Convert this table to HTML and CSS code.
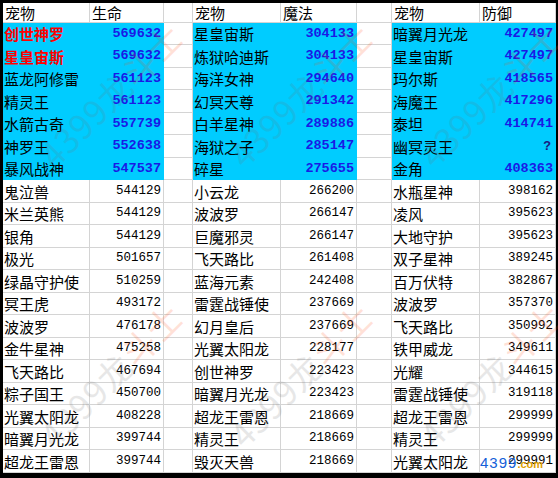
FILE: index.html
```html
<!DOCTYPE html>
<html lang="zh">
<head>
<meta charset="utf-8">
<title>宠物属性排行</title>
<link rel="stylesheet" href="styles.css">
</head>
<body>
<div class="page">
  <div class="sheet">
    <div class="c h">宠物</div><div class="c h">生命</div><div class="c g"></div>
    <div class="c h">宠物</div><div class="c h">魔法</div><div class="c g"></div>
    <div class="c h">宠物</div><div class="c h">防御</div>

    <div class="c hl red">创世神罗</div><div class="c hl n bl">569632</div><div class="c g"></div>
    <div class="c hl">星皇宙斯</div><div class="c hl n bl">304133</div><div class="c g"></div>
    <div class="c hl">暗翼月光龙</div><div class="c hl n bl">427497</div>

    <div class="c hl red">星皇宙斯</div><div class="c hl n bl">569632</div><div class="c g"></div>
    <div class="c hl">炼狱哈迪斯</div><div class="c hl n bl">304133</div><div class="c g"></div>
    <div class="c hl">星皇宙斯</div><div class="c hl n bl">427497</div>

    <div class="c hl">蓝龙阿修雷</div><div class="c hl n bl">561123</div><div class="c g"></div>
    <div class="c hl">海洋女神</div><div class="c hl n bl">294640</div><div class="c g"></div>
    <div class="c hl">玛尔斯</div><div class="c hl n bl">418565</div>

    <div class="c hl">精灵王</div><div class="c hl n bl">561123</div><div class="c g"></div>
    <div class="c hl">幻冥天尊</div><div class="c hl n bl">291342</div><div class="c g"></div>
    <div class="c hl">海魔王</div><div class="c hl n bl">417296</div>

    <div class="c hl">水箭古奇</div><div class="c hl n bl">557739</div><div class="c g"></div>
    <div class="c hl">白羊星神</div><div class="c hl n bl">289886</div><div class="c g"></div>
    <div class="c hl">泰坦</div><div class="c hl n bl">414741</div>

    <div class="c hl">神罗王</div><div class="c hl n bl">552638</div><div class="c g"></div>
    <div class="c hl">海狱之子</div><div class="c hl n bl">285147</div><div class="c g"></div>
    <div class="c hl">幽冥灵王</div><div class="c hl n q">?</div>

    <div class="c hl">暴风战神</div><div class="c hl n bl">547537</div><div class="c g"></div>
    <div class="c hl">碎星</div><div class="c hl n bl">275655</div><div class="c g"></div>
    <div class="c hl">金角</div><div class="c hl n bl">408363</div>

    <div class="c">鬼泣兽</div><div class="c n">544129</div><div class="c g"></div>
    <div class="c">小云龙</div><div class="c n">266200</div><div class="c g"></div>
    <div class="c">水瓶星神</div><div class="c n">398162</div>

    <div class="c">米兰英熊</div><div class="c n">544129</div><div class="c g"></div>
    <div class="c">波波罗</div><div class="c n">266147</div><div class="c g"></div>
    <div class="c">凌风</div><div class="c n">395623</div>

    <div class="c">银角</div><div class="c n">544129</div><div class="c g"></div>
    <div class="c">巨魔邪灵</div><div class="c n">266147</div><div class="c g"></div>
    <div class="c">大地守护</div><div class="c n">395623</div>

    <div class="c">极光</div><div class="c n">501657</div><div class="c g"></div>
    <div class="c">飞天路比</div><div class="c n">261408</div><div class="c g"></div>
    <div class="c">双子星神</div><div class="c n">389245</div>

    <div class="c">绿晶守护使</div><div class="c n">510259</div><div class="c g"></div>
    <div class="c">蓝海元素</div><div class="c n">242408</div><div class="c g"></div>
    <div class="c">百万伏特</div><div class="c n">382867</div>

    <div class="c">冥王虎</div><div class="c n">493172</div><div class="c g"></div>
    <div class="c">雷霆战锤使</div><div class="c n">237669</div><div class="c g"></div>
    <div class="c">波波罗</div><div class="c n">357370</div>

    <div class="c">波波罗</div><div class="c n">476178</div><div class="c g"></div>
    <div class="c">幻月皇后</div><div class="c n">237669</div><div class="c g"></div>
    <div class="c">飞天路比</div><div class="c n">350992</div>

    <div class="c">金牛星神</div><div class="c n">475258</div><div class="c g"></div>
    <div class="c">光翼太阳龙</div><div class="c n">228177</div><div class="c g"></div>
    <div class="c">铁甲威龙</div><div class="c n">349611</div>

    <div class="c">飞天路比</div><div class="c n">467694</div><div class="c g"></div>
    <div class="c">创世神罗</div><div class="c n">223423</div><div class="c g"></div>
    <div class="c">光耀</div><div class="c n">344615</div>

    <div class="c">粽子国王</div><div class="c n">450700</div><div class="c g"></div>
    <div class="c">暗翼月光龙</div><div class="c n">223423</div><div class="c g"></div>
    <div class="c">雷霆战锤使</div><div class="c n">319118</div>

    <div class="c">光翼太阳龙</div><div class="c n">408228</div><div class="c g"></div>
    <div class="c">超龙王雷恩</div><div class="c n">218669</div><div class="c g"></div>
    <div class="c">超龙王雷恩</div><div class="c n">299999</div>

    <div class="c">暗翼月光龙</div><div class="c n">399744</div><div class="c g"></div>
    <div class="c">精灵王</div><div class="c n">218669</div><div class="c g"></div>
    <div class="c">精灵王</div><div class="c n">299999</div>

    <div class="c">超龙王雷恩</div><div class="c n">399744</div><div class="c g"></div>
    <div class="c">毁灭天兽</div><div class="c n">218669</div><div class="c g"></div>
    <div class="c">光翼太阳龙</div><div class="c n">299991</div>
  </div>

  <div class="wm wm1"><span class="wg">4399龙</span><span class="wo">斗士</span></div>
  <div class="wm wm2"><span class="wg">4399龙</span><span class="wo">斗士</span></div>
  <div class="wm wm3"><span class="wg">4399龙</span><span class="wo">斗士</span></div>
  <div class="wm wm4"><span class="wg">4399龙</span><span class="wo">斗士</span></div>
  <div class="wm wm5"><span class="wg">4399龙</span><span class="wo">斗士</span></div>
  <div class="wm wm6"><span class="wg">4399龙</span><span class="wo">斗士</span></div>

  <div class="logo"><span class="lnum">4399</span><span class="lsub">.com</span></div>
</div>
</body>
</html>
```
FILE: styles.css
```css
html, body {
  margin: 0;
  padding: 0;
  background: #000;
}
body {
  width: 558px;
  height: 478px;
  overflow: hidden;
}
.page {
  position: relative;
  padding: 3px 0 0 3px;
  width: 558px;
  height: 478px;
  box-sizing: border-box;
  overflow: hidden;
}
.sheet {
  display: grid;
  grid-template-columns: 87px 74px 29px 88px 76px 35px 88px 76px;
  grid-template-rows: 20px repeat(10, 22px 23px);
  width: 553px;
  background: #fff;
  font-family: "Noto Sans CJK SC", "Noto Sans", sans-serif;
  font-size: 15px;
  color: #000;
}
.c {
  box-sizing: border-box;
  border-right: 1px solid #d4d4d4;
  border-bottom: 1px solid #d4d4d4;
  background: #fff;
  display: flex;
  align-items: center;
  padding: 0 1px;
  white-space: nowrap;
  overflow: hidden;
  line-height: 1;
}
.h {
  padding-left: 2px;
}
.n {
  justify-content: flex-end;
  font-family: "Liberation Mono", "DejaVu Sans Mono", monospace;
  font-size: 12.5px;
  padding-right: 2px;
}
.hl {
  background: #00ccff;
  border-color: #00ccff;
}
.red {
  color: #ff0000;
  font-weight: bold;
}
.bl {
  color: #1a1ae6;
  font-weight: bold;
  font-size: 13.5px;
}
.q {
  color: #1a1a80;
  font-weight: bold;
  font-size: 13px;
  padding-right: 4px;
}
.wm {
  position: absolute;
  font-family: "Noto Sans CJK SC", sans-serif;
  font-size: 34px;
  white-space: nowrap;
  transform: rotate(-45deg);
  transform-origin: center;
  pointer-events: none;
  opacity: 0.16;
  letter-spacing: 1px;
}
.wg {
  color: #707070;
}
.wo {
  color: #ff4a10;
}
.wm1 { left: 18px; top: 70px; }
.wm2 { left: 208px; top: 70px; }
.wm3 { left: 398px; top: 70px; }
.wm4 { left: 18px; top: 350px; }
.wm5 { left: 208px; top: 350px; }
.wm6 { left: 398px; top: 350px; }
.logo {
  position: absolute;
  left: 480px;
  top: 454px;
  display: flex;
  align-items: baseline;
  font-family: "Liberation Sans", Arial, sans-serif;
}
.lnum {
  color: #1560d8;
  font-size: 15px;
  letter-spacing: 1px;
}
.lsub {
  color: #e0a000;
  font-size: 11px;
  font-weight: bold;
}
```
